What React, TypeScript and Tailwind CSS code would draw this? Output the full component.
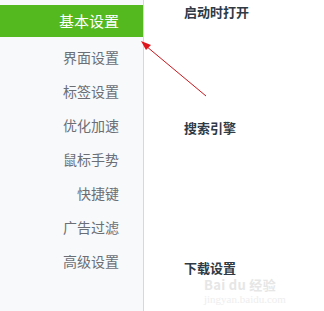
import React from "react";

const items = ["界面设置", "标签设置", "优化加速", "鼠标手势", "快捷键", "广告过滤", "高级设置"];

export default function App() {
  return (
    <div
      className="relative w-[324px] h-[311px] bg-white overflow-hidden flex"
      style={{ fontFamily: '"Microsoft YaHei", "Noto Sans CJK SC", sans-serif' }}
    >
      <div className="w-[144px] h-full bg-[#f7f9fb] border-r border-[#d5d8dc] pt-[5px] flex flex-col">
        <div className="h-[32px] bg-[#54b81f] text-white text-[15px] flex items-center justify-end pr-[24px]">基本设置</div>
        <div className="flex flex-col pt-[3px]">
          {items.map((t) => (
            <div key={t} className="h-[34px] flex items-center justify-end pr-[24px] text-[14px] text-[#6b6f75]">
              {t}
            </div>
          ))}
        </div>
      </div>
      <div className="flex-1 flex flex-col items-start pl-[40px] pt-[3px] text-[13px] leading-[18px] font-bold text-[#2f3a45]">
        <div>启动时打开</div>
        <div className="mt-[98px]">搜索引擎</div>
        <div className="mt-[122px]">下载设置</div>
      </div>
      <div className="absolute left-[204px] top-[278px] flex flex-col items-start leading-none pointer-events-none">
        <div className="text-[#e6e6e6] text-[13px] font-bold tracking-wide">Bai du 经验</div>
        <div className="text-[#eeeeee] text-[11px] mt-[3px]" style={{ fontFamily: '"Liberation Serif", serif' }}>jingyan.baidu.com</div>
      </div>
      <svg className="absolute left-0 top-0 pointer-events-none" width="324" height="311">
        <line x1="206" y1="96" x2="146" y2="46" stroke="#c8161d" strokeWidth="1" />
        <polygon points="141,41 151,45 146,50" fill="#e0141b" />
      </svg>
    </div>
  );
}
